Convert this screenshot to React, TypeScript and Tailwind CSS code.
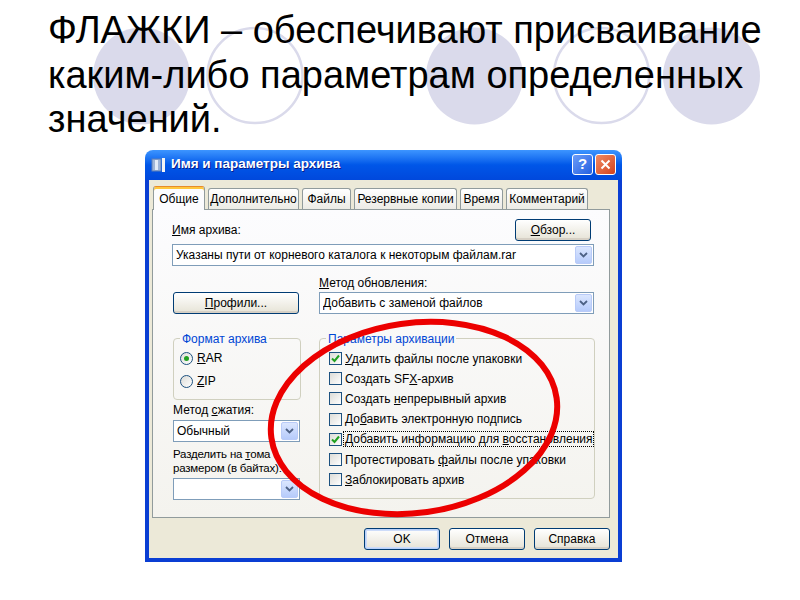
import type { ReactNode } from "react";

const ui = "font-['Liberation_Sans',Arial,sans-serif]";

function Chevron() {
  return (
    <svg width="9" height="6" viewBox="0 0 9 6">
      <path d="M1 1 L4.5 4.5 L8 1" fill="none" stroke="#4d6185" strokeWidth="1.8" />
    </svg>
  );
}

function Combo({ value, className = "" }: { value?: string; className?: string }) {
  return (
    <div className={`flex h-[22px] items-center border border-[#7f9db9] bg-white pl-[3px] ${className}`}>
      <span className="flex-1 truncate text-[12px] text-black">{value}</span>
      <div className="m-[1px] flex h-[18px] w-[17px] items-center justify-center rounded-[2px] border border-[#b9cbf8] bg-gradient-to-b from-[#dbe6fe] to-[#b6cbfb]">
        <Chevron />
      </div>
    </div>
  );
}

function Btn({ children, className = "", primary = false }: { children: ReactNode; className?: string; primary?: boolean }) {
  return (
    <div
      className={`flex h-[22px] items-center justify-center rounded-[3px] border border-[#003c74] bg-gradient-to-b from-white to-[#e6e3d6] text-[12px] text-black ${
        primary ? "shadow-[inset_0_0_0_1px_#b9d1f9,inset_0_0_0_2px_#cddcf9]" : "shadow-[inset_0_-2px_0_#d6d0c5]"
      } ${className}`}
    >
      {children}
    </div>
  );
}

function Check({ checked, label, focus = false }: { checked?: boolean; label: ReactNode; focus?: boolean }) {
  return (
    <div className="flex h-[20.2px] items-center">
      <div className="flex h-[13px] w-[13px] shrink-0 items-center justify-center border border-[#1c5180] bg-gradient-to-br from-[#dcdcd7] to-white">
        {checked ? (
          <svg width="9" height="9" viewBox="0 0 9 9">
            <path d="M1 4.5 L3.5 7 L8 1.5" fill="none" stroke="#21a121" strokeWidth="2" />
          </svg>
        ) : null}
      </div>
      <span className={`ml-[2px] px-[1px] text-[12px] leading-[14px] text-black ${focus ? "outline outline-1 outline-dotted outline-black" : ""}`}>
        {label}
      </span>
    </div>
  );
}

function Radio({ checked, label }: { checked?: boolean; label: ReactNode }) {
  return (
    <div className="flex h-[23px] items-center">
      <div className="flex h-[13px] w-[13px] items-center justify-center rounded-full border border-[#1c5180] bg-gradient-to-br from-[#dcdcd7] to-white">
        {checked ? <div className="h-[5px] w-[5px] rounded-full bg-[#21a121]" /> : null}
      </div>
      <span className="ml-[4px] text-[12px] text-black">{label}</span>
    </div>
  );
}

const tabs = [
  { name: "Дополнительно", w: "w-[91px]" },
  { name: "Файлы", w: "w-[49px]" },
  { name: "Резервные копии", w: "w-[103px]" },
  { name: "Время", w: "w-[43px]" },
  { name: "Комментарий", w: "w-[82px]" },
];

function Dialog() {
  return (
    <div className={`ml-[145px] mt-[8px] w-[477px] ${ui}`}>
      {/* title bar */}
      <div className="flex h-[30px] items-center rounded-t-[8px] bg-gradient-to-b from-[#3d95ff] via-[#0056e8] to-[#0048dc] px-[6px]">
        <svg width="16" height="16" viewBox="0 0 16 16" className="mr-[4px]">
          <rect x="1" y="2" width="9" height="12" fill="#9fb5d8" stroke="#5d7fb8" />
          <rect x="4" y="3" width="3" height="10" fill="#e4ecf8" />
          <rect x="11" y="1" width="3" height="14" fill="#f4f4f4" />
        </svg>
        <span className="flex-1 text-[13.5px] font-bold text-white [text-shadow:1px_1px_0_#0a1e8a]">Имя и параметры архива</span>
        <div className="flex h-[21px] w-[21px] items-center justify-center rounded-[3px] border border-white bg-gradient-to-br from-[#6b9cf8] to-[#245fe0] text-[15px] font-bold text-white">
          ?
        </div>
        <div className="ml-[2px] flex h-[21px] w-[21px] items-center justify-center rounded-[3px] border border-white bg-gradient-to-br from-[#f08a63] to-[#d2401a]">
          <svg width="11" height="11" viewBox="0 0 11 11">
            <path d="M1.5 1.5 L9.5 9.5 M9.5 1.5 L1.5 9.5" stroke="white" strokeWidth="2" />
          </svg>
        </div>
      </div>

      {/* body */}
      <div className="border-x-[4px] border-b-[4px] border-[#0a3ed3] bg-[#ece9d8] pb-[8px] pl-[3px] pr-[8px] pt-[6px]">
        {/* tabs */}
        <div className="flex items-end pl-[1px]">
          <div className="relative z-10 -mb-[1px] flex h-[24px] w-[52px] items-start justify-center rounded-t-[3px] border border-b-0 border-[#919b9c] border-t-[#e68b2c] bg-[#fcfcfe] pt-[3px] text-[12px] shadow-[inset_0_2px_0_#ffc73c]">
            Общие
          </div>
          {tabs.map((t) => (
            <div
              key={t.name}
              className={`ml-[3px] flex h-[21px] items-center justify-center rounded-t-[3px] border border-b-0 border-[#919b9c] bg-gradient-to-b from-white to-[#ecebe5] text-[12px] ${t.w}`}
            >
              {t.name}
            </div>
          ))}
        </div>

        {/* panel */}
        <div className="h-[309px] border border-[#919b9c] bg-gradient-to-b from-[#fcfcfe] to-[#f4f3ee] pl-[19px] pr-[15px] pt-[9px]">
          <div className="flex items-end justify-between pr-[3px]">
            <span className="pb-[2px] text-[12px]">
              <u>И</u>мя архива:
            </span>
            <Btn className="w-[76px]">
              <u>О</u>бзор...
            </Btn>
          </div>
          <Combo className="mt-[3px]" value="Указаны пути от корневого каталога к некоторым файлам.rar" />

          <div className="mt-[10px] grid grid-cols-[128px_275px] items-end gap-x-[18px] pl-[1px]">
            <Btn className="w-[126px]">
              <u>П</u>рофили...
            </Btn>
            <div>
              <div className="text-[12px] leading-[14px]">
                <u>М</u>етод обновления:
              </div>
              <Combo className="mt-[2px]" value="Добавить с заменой файлов" />
            </div>
          </div>

          <div className="mt-[16px] grid grid-cols-[128px_276px] items-start gap-x-[18px] pl-[1px]">
            <div>
              <fieldset className="h-[70px] rounded-[4px] border border-[#d0d0bf] pl-[6px]">
                <legend className="px-[2px] text-[12px] text-[#0046d5]">Формат архива</legend>
                <div className="-mt-[1px]">
                  <Radio checked label={<><u>R</u>AR</>} />
                  <Radio label={<><u>Z</u>IP</>} />
                </div>
              </fieldset>
              <div className="mt-[3px] text-[12px] leading-[14px]">
                Метод <u>с</u>жатия:
              </div>
              <Combo className="mt-[3px] w-[127px]" value="Обычный" />
              <div className="mt-[5px] whitespace-nowrap text-[11.5px] leading-[14px] tracking-[-0.2px]">
                Разделить на <u>т</u>ома
                <br />
                размером (в байтах):
              </div>
              <Combo className="mt-[3px] w-[127px]" />
            </div>
            <fieldset className="h-[169px] rounded-[4px] border border-[#d0d0bf] pl-[9px]">
              <legend className="ml-[-3px] px-[2px] text-[12px] text-[#0046d5]">Параметры архивации</legend>
              <div className="mt-[1px]">
                <Check checked label={<><u>У</u>далить файлы после упаковки</>} />
                <Check label={<>Создать SF<u>X</u>-архив</>} />
                <Check label={<>Создать <u>н</u>епрерывный архив</>} />
                <Check label={<>До<u>б</u>авить электронную подпись</>} />
                <Check checked focus label={<>Добавить информацию для <u>в</u>осстановления</>} />
                <Check label={<>Протестировать <u>ф</u>айлы после упаковки</>} />
                <Check label={<><u>З</u>аблокировать архив</>} />
              </div>
            </fieldset>
          </div>
        </div>

        {/* bottom buttons */}
        <div className="mt-[10px] flex justify-end gap-[9px]">
          <Btn primary className="w-[76px]">OK</Btn>
          <Btn className="w-[76px]">Отмена</Btn>
          <Btn className="w-[76px]">Справка</Btn>
        </div>
      </div>
    </div>
  );
}

export default function App() {
  const filled = [141.5, 474.5, 711.5];
  const rings = [255, 601.5];
  return (
    <div className="relative h-[600px] w-[800px] overflow-hidden bg-white">
      <svg className="absolute left-0 top-0" width="800" height="200">
        {filled.map((cx) => (
          <circle key={cx} cx={cx} cy={76} r={48.5} fill="#dadaeb" />
        ))}
        {rings.map((cx) => (
          <circle key={cx} cx={cx} cy={75.5} r={47.5} fill="none" stroke="#dadaeb" strokeWidth="2.5" />
        ))}
      </svg>

      <h1 className="relative pl-[48px] pt-[8px] font-['Liberation_Sans',Arial,sans-serif] text-[38px] font-normal leading-[44.5px] text-black">
        ФЛАЖКИ – обеспечивают присваивание
        <br />
        каким-либо параметрам определенных
        <br />
        значений.
      </h1>

      <Dialog />

      <svg className="pointer-events-none absolute left-0 top-0" width="800" height="600">
        <ellipse cx="414" cy="418" rx="144" ry="95" transform="rotate(-8 414 418)" fill="none" stroke="#ec0000" strokeWidth="6" />
      </svg>
    </div>
  );
}
